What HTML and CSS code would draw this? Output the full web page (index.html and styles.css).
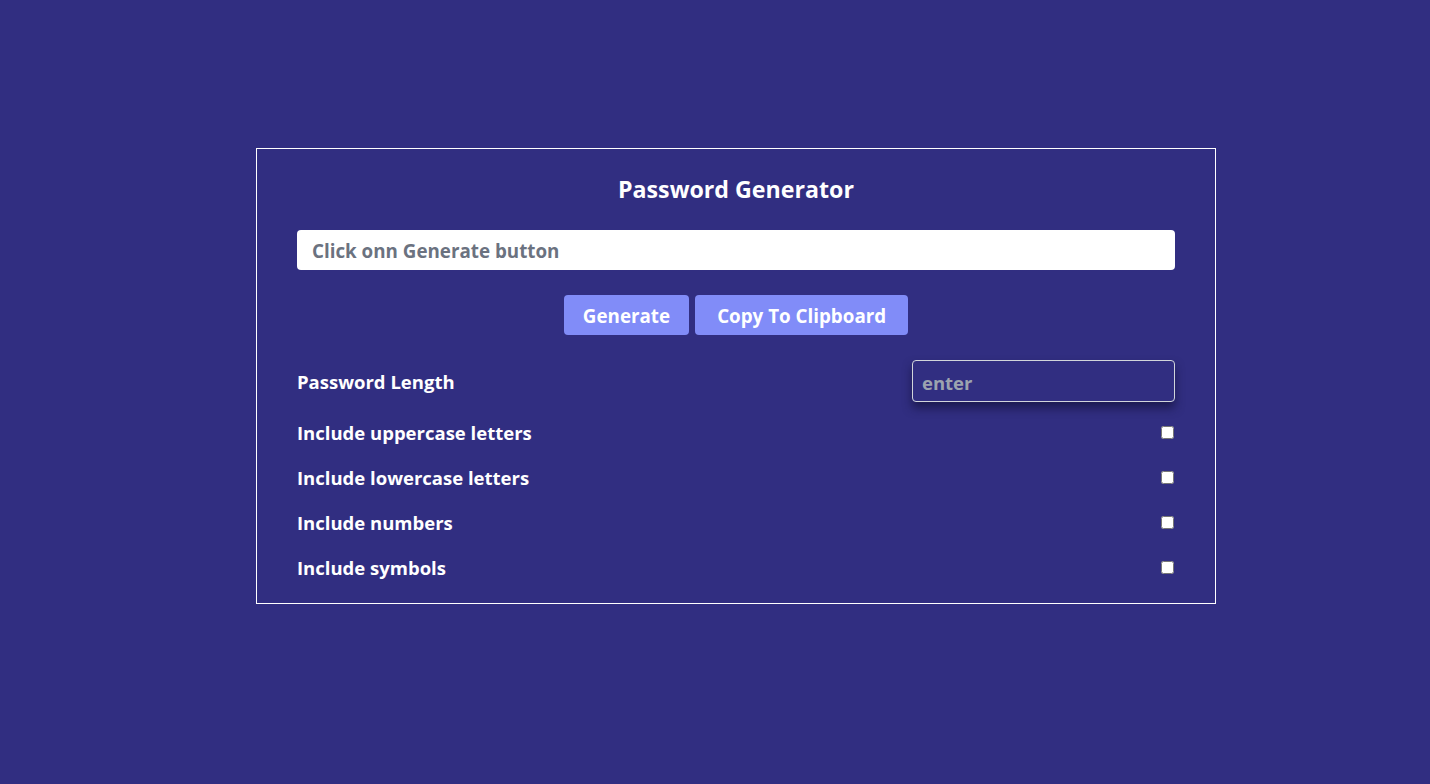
FILE: index.html
```html
<!DOCTYPE html>
<html>
<head>
<meta charset="utf-8">
<link rel="stylesheet" href="styles.css">
</head>
<body>
<div class="card">
  <h1 class="title">Password Generator</h1>
  <input class="output" type="text" placeholder="Click onn Generate button">
  <div class="actions">
    <button class="btn btn-generate">Generate</button>
    <button class="btn btn-copy">Copy To Clipboard</button>
  </div>
  <div class="row length-row">
    <label class="label">Password Length</label>
    <input class="length" type="text" placeholder="enter">
  </div>
  <div class="options">
    <div class="row opt"><label class="label">Include uppercase letters</label><input class="check" type="checkbox"></div>
    <div class="row opt"><label class="label">Include lowercase letters</label><input class="check" type="checkbox"></div>
    <div class="row opt"><label class="label">Include numbers</label><input class="check" type="checkbox"></div>
    <div class="row opt"><label class="label">Include symbols</label><input class="check" type="checkbox"></div>
  </div>
</div>
</body>
</html>
```

FILE: styles.css
```css
* { box-sizing: border-box; }
html, body { margin: 0; padding: 0; }
body {
  background: #312e81;
  font-family: "Open Sans", "Noto Sans", sans-serif;
  color: #ffffff;
  min-height: 784px;
  padding: 148px 0 0 256px;
}
.card {
  width: 960px;
  border: 1px solid #ffffff;
  padding: 24px 40px 13px 40px;
  display: flex;
  flex-direction: column;
}
.title {
  margin: 0;
  font-size: 23.2px;
  line-height: 32px;
  font-weight: 700;
  text-align: center;
}
.output {
  margin-top: 25px;
  height: 40px;
  border: none;
  border-radius: 4px;
  background: #ffffff;
  padding: 2px 15px 0 15px;
  font-family: inherit;
  font-size: 18.8px;
  font-weight: 700;
  color: #374151;
  outline: none;
}
.output::placeholder { color: #6b7280; }
.actions {
  margin-top: 25px;
  display: flex;
  justify-content: center;
  gap: 6px;
}
.btn {
  height: 40px;
  border: none;
  border-radius: 4px;
  background: #818cf8;
  color: #ffffff;
  font-family: inherit;
  font-size: 18.8px;
  font-weight: 700;
}
.btn-generate { padding: 2px 19px 0 19px; }
.btn-copy { padding: 2px 22px 0 22px; }
.row {
  display: flex;
  justify-content: space-between;
  align-items: center;
}
.length-row { margin-top: 25px; height: 42px; }
.label {
  font-size: 18.5px;
  font-weight: 700;
  padding-top: 0;
}
.length {
  width: 263px;
  height: 42px;
  background: transparent;
  border: 1px solid #d1d5db;
  border-radius: 4px;
  padding: 2px 9px 0 9px;
  font-family: inherit;
  font-size: 18.5px;
  font-weight: 700;
  color: #ffffff;
  box-shadow: 0 6px 10px rgba(20, 18, 60, 0.7);
  outline: none;
}
.length::placeholder { color: #9ca3af; }
.options { margin-top: 8px; display: flex; flex-direction: column; }
.opt { height: 45px; }
.check {
  width: 13px;
  height: 13px;
  margin: 0 1px 0 0;
}
```
